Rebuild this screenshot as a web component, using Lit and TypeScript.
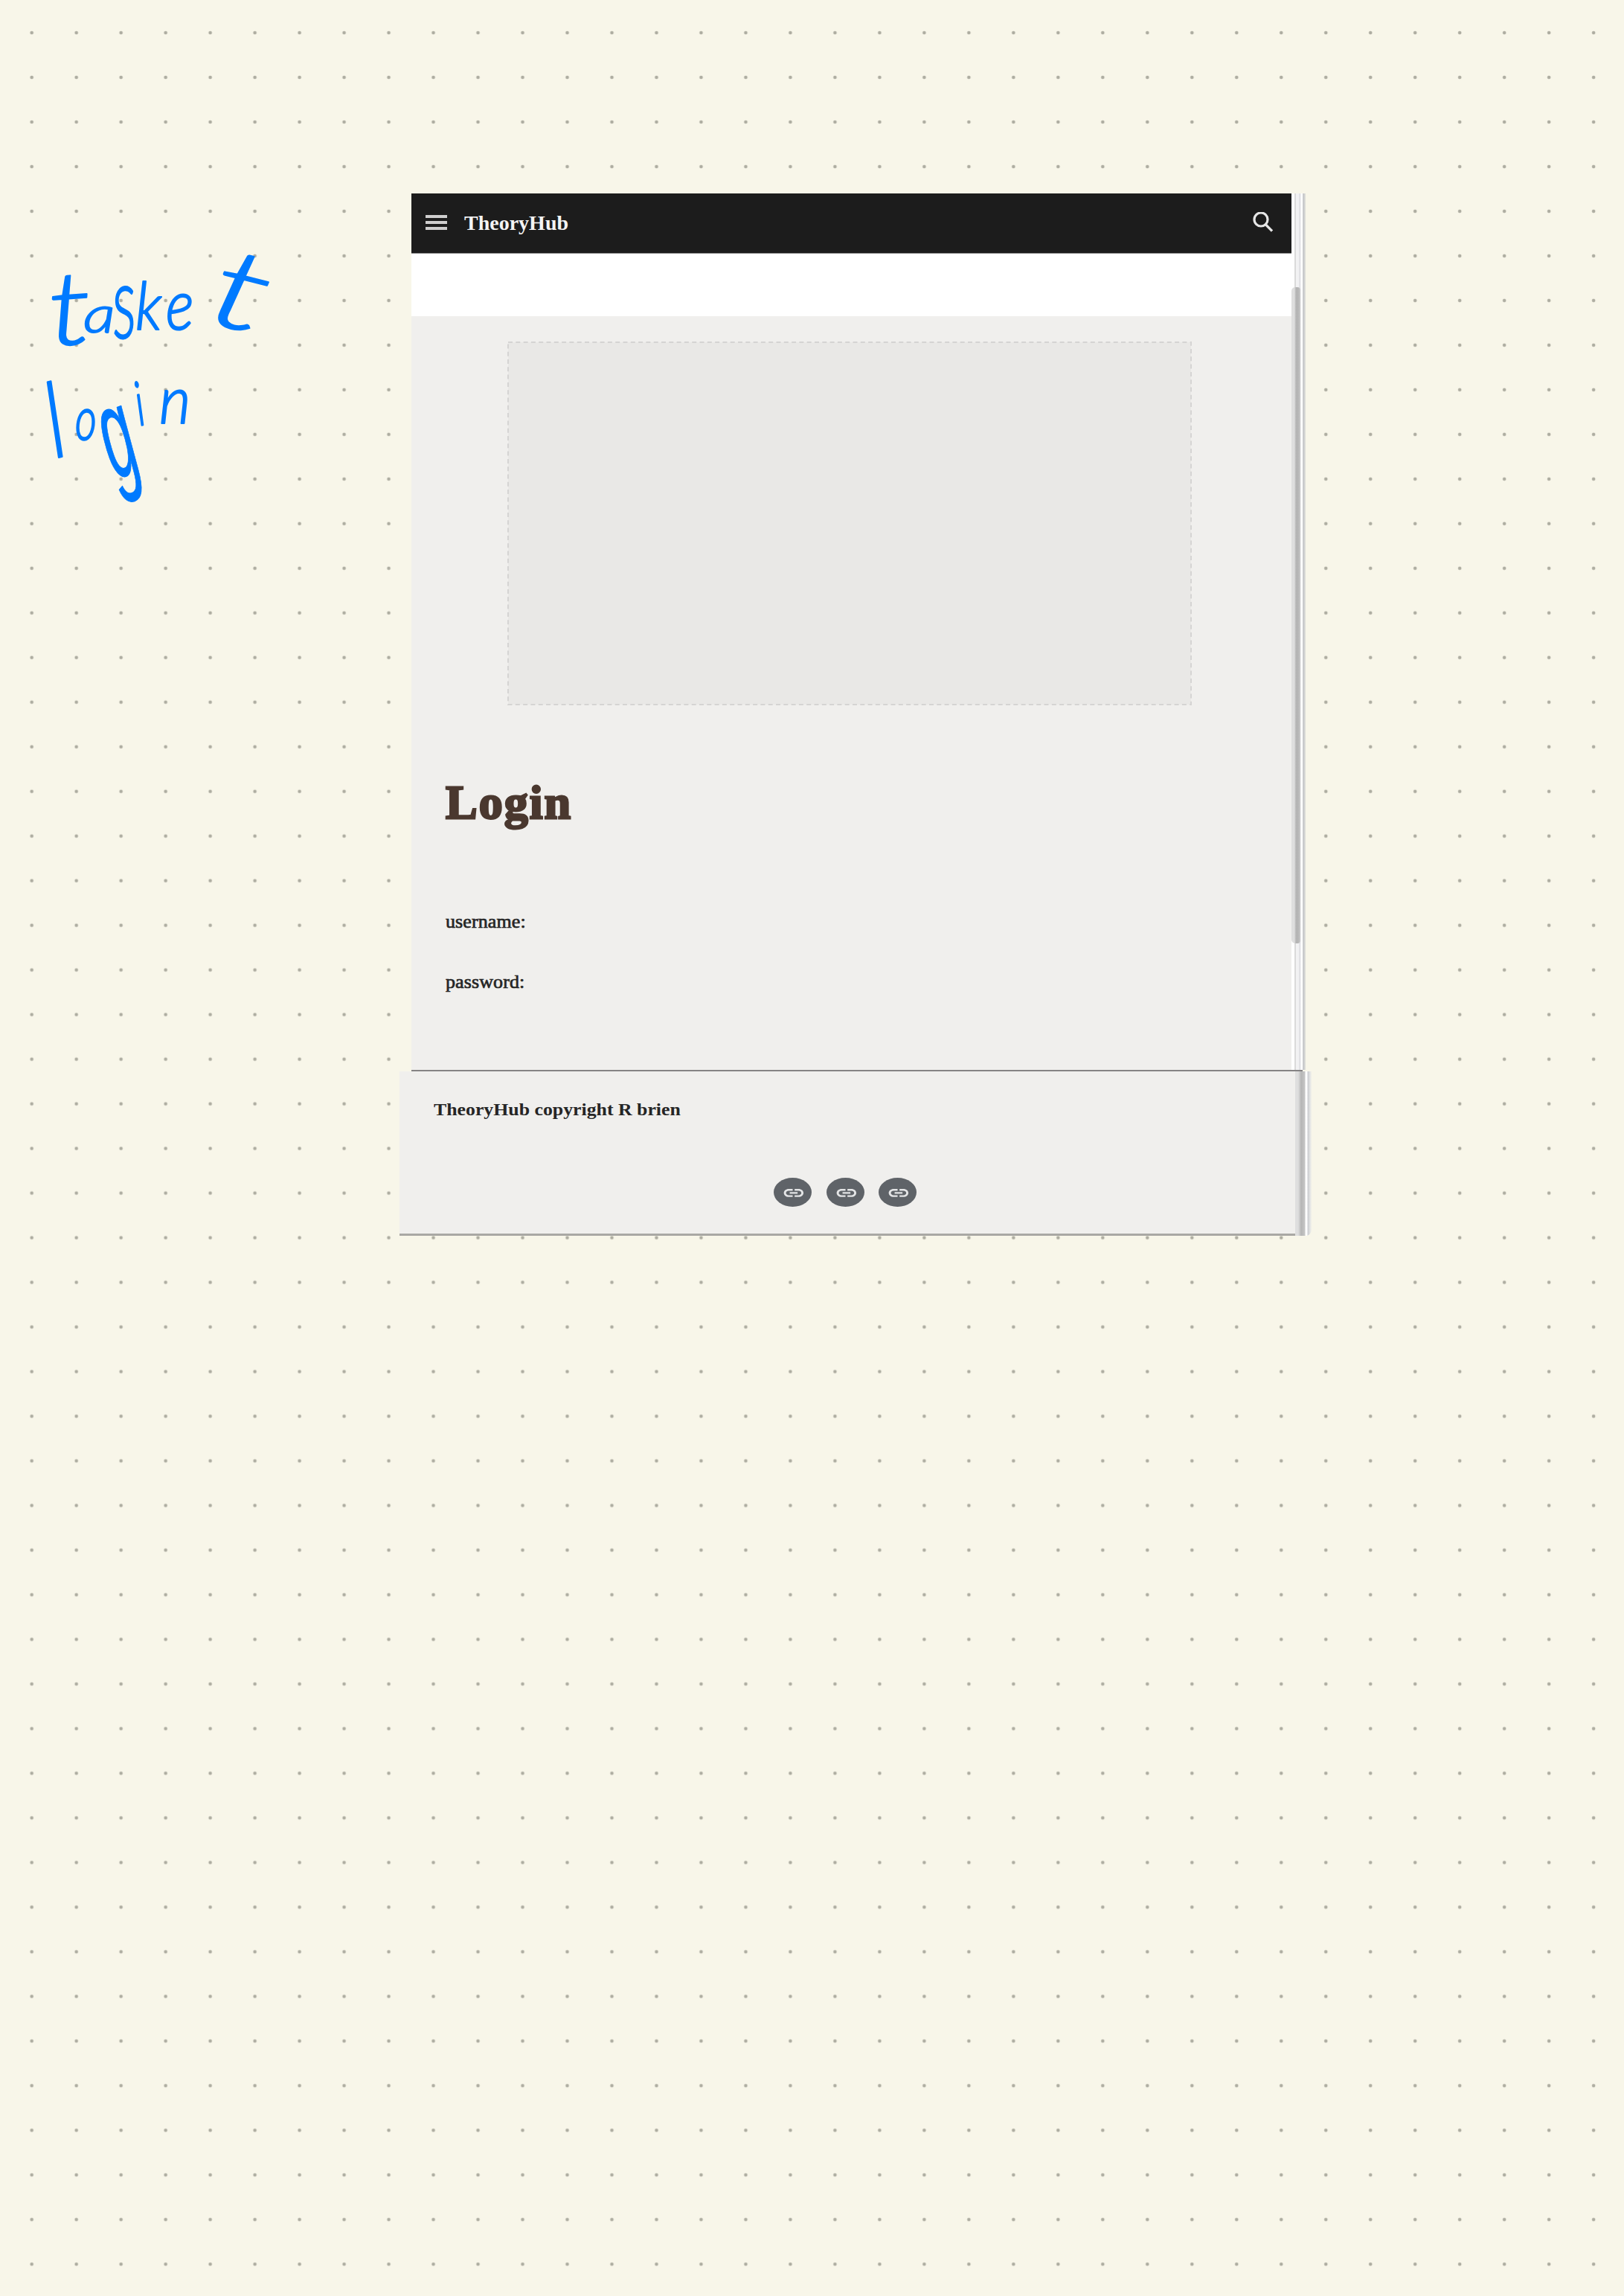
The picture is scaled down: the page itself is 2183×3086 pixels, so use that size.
import { LitElement, html, css, svg } from "lit";
import { customElement } from "lit/decorators.js";

@customElement("link-badge")
class LinkBadge extends LitElement {
  static styles = css`
    :host { display: block; width: 51px; height: 39px; }
    .icon { display: block; width: 51px; height: 39px; }
    .disc { fill: #5f6368; }
    .chain { fill: #e4e5e6; }
  `;
  render() {
    return html`<svg class="icon" viewBox="0 0 51 39">
      <ellipse class="disc" cx="25.5" cy="19.5" rx="25.5" ry="19.5"></ellipse>
      <path class="chain" transform="translate(11 7.7) scale(1.32 1.06)"
        d="M4.200 12c0-1.540 1.260-2.800 2.800-2.800h4V7H7c-2.760 0-5 2.240-5 5s2.240 5 5 5h4v-2.200H7c-1.540 0-2.800-1.260-2.800-2.800zM8 13h8v-2H8v2zm9-6h-4v2.200h4c1.540 0 2.800 1.260 2.800 2.800s-1.260 2.800-2.800 2.800h-4V17h4c2.760 0 5-2.240 5-5s-2.240-5-5-5z"></path>
    </svg>`;
  }
}

interface Mark { ch: string; x: number; y: number; turn: number; sx: number; sy: number; }

const note: Mark[][] = [
  [
    { ch: "t", x: 68, y: 465, turn: -4, sx: 1.7, sy: 1.38 },
    { ch: "a", x: 112, y: 447, turn: 0, sx: 0.86, sy: 0.7 },
    { ch: "s", x: 154, y: 455, turn: -4, sx: 0.8, sy: 1.36 },
    { ch: "k", x: 182, y: 443, turn: 0, sx: 0.8, sy: 0.88 },
    { ch: "e", x: 223, y: 443, turn: 0, sx: 0.8, sy: 0.94 },
    { ch: "t", x: 275, y: 432, turn: 14, sx: 2.25, sy: 1.5 },
  ],
  [
    { ch: "l", x: 74, y: 616, turn: -14, sx: 1.1, sy: 1.4 },
    { ch: "o", x: 101, y: 591, turn: 0, sx: 0.56, sy: 0.8 },
    { ch: "g", x: 155, y: 645, turn: -20, sx: 0.76, sy: 1.72 },
    { ch: "i", x: 188, y: 572, turn: -12, sx: 0.5, sy: 0.82 },
    { ch: "n", x: 214, y: 569, turn: 0, sx: 0.82, sy: 0.88 },
  ],
];

@customElement("app-root")
class AppRoot extends LitElement {
  static styles = css`
    :host { display: block; }
    .paper {
      position: relative; box-sizing: border-box; width: 2183px; height: 3086px;
      padding: 260px 420px 0 537px; overflow: hidden; background-color: #f8f6e9;
      background-image: radial-gradient(circle at 30px 30px, #aeada1 1.900px, rgba(174,173,161,0) 2.700px);
      background-size: 59.99px 59.994px; background-position: 12.700px 14px;
      font-family: "Liberation Serif", serif; color: #252525;
    }
    .ink { position: absolute; left: 0; top: 0; width: 540px; height: 720px; }
    .mark {
      font-family: "Lato", sans-serif; font-size: 100px; font-style: italic; font-weight: 300; fill: #007aff;
      stroke: #007aff; stroke-width: 2px; stroke-linejoin: round; vector-effect: non-scaling-stroke;
    }
    .mark.looped { font-family: "Liberation Sans", sans-serif; stroke-width: 1px; }
    .window { display: flex; width: 1202px; height: 1178px; margin-left: 16px; }
    .page { width: 1183px; display: flex; flex-direction: column; background: #f0efed; }
    .bar { display: flex; align-items: center; height: 81px; background: #1c1c1c; color: #f4f4f4; border-bottom: 1px solid #8b8b8b; box-sizing: border-box; }
    .menu { display: grid; gap: 4px; margin-left: 19px; width: 29px; padding-bottom: 2px; }
    .line { height: 4px; background: #cfcece; }
    .brand { margin-left: 23px; font-size: 28px; font-weight: 700; line-height: 40px; }
    .search { width: 27px; height: 27px; margin-left: auto; margin-right: 25px; margin-bottom: 3px; }
    .lens { fill: none; stroke: #e6e6e6; stroke-width: 3.200; }
    .blank { height: 84px; background: #fff; }
    .body { padding: 34px 46px 0; }
    .drop { width: 920px; height: 489px; margin-left: 83px; display: block; }
    .dashes { fill: #e9e8e6; stroke: #d5d4d3; stroke-width: 2; stroke-dasharray: 6 4.300; }
    h1 { margin: 91px 0 0; font-size: 64px; line-height: 80px; letter-spacing: 2px; color: #4a382f; -webkit-text-stroke: 2.800px #4a382f; }
    .field { font-size: 26px; line-height: 30px; -webkit-text-stroke: 0.700px #252525; letter-spacing: 0.100px; }
    .user { margin-top: 105px; }
    .pass { margin-top: 51px; }
    .track {
      width: 19px; padding-top: 126px; box-sizing: border-box;
      background: linear-gradient(90deg, #fff 4px, #dadada 4px 6px, #f2f2f3 6px 10px, #e2e2e5 10px 12px, #fff 13px 15px, #c9cacc 15px 17px, #dddeda 18px);
    }
    .thumb { width: 12px; height: 882px; border-radius: 5px 4px 4px 5px; background: linear-gradient(90deg, #dedede 0 4px, #b5b5b5 6px 9px, #c9c9c9 12px); }
    .rule { width: 1198px; height: 2px; margin-left: 16px; background: #858384; }
    .footer { display: flex; width: 1226px; height: 221px; }
    .panel { display: flex; flex-direction: column; width: 1204px; background: #f0efed; border-bottom: 3px solid #a9a8a4; box-sizing: border-box; }
    .copy { margin: 36px 0 0 46px; font-size: 24px; line-height: 30px; font-weight: 700; white-space: nowrap; transform: scaleX(1.075); transform-origin: left; }
    .links { display: flex; gap: 19.500px; margin: 77px 0 0 503px; }
    .edge { width: 22px; border-bottom-right-radius: 8px; background: linear-gradient(90deg, #dedede 0 4px, #cacaca 6px, #b5b5b5 8px, #c6c6c6 13px, #fff 14px 16px, #c9cbcf 17px, #e4e5e4 20px, #f2f1e9 22px); }
  `;

  private mark(m: Mark) {
    const place = `translate(${m.x} ${m.y}) rotate(${m.turn}) scale(${m.sx} ${m.sy})`;
    return svg`<text class=${m.ch === "g" ? "mark looped" : "mark"} transform=${place}>${m.ch}</text>`;
  }

  render() {
    return html`<main class="paper">
      <svg class="ink" viewBox="0 0 540 720">${note.map((word) => svg`<g>${word.map((m) => this.mark(m))}</g>`)}</svg>
      <section class="window">
        <div class="page">
          <header class="bar">
            <div class="menu"><span class="line"></span><span class="line"></span><span class="line"></span></div>
            <div class="brand">TheoryHub</div>
            <svg class="search" viewBox="0 0 27 27"><circle class="lens" cx="11" cy="10" r="9"></circle><path class="lens" d="M17 16.500 26 25.500"></path></svg>
          </header>
          <div class="blank"></div>
          <div class="body">
            <svg class="drop" viewBox="0 0 920 489"><rect class="dashes" x="1" y="1" width="918" height="487"></rect></svg>
            <h1>Login</h1>
            <div class="field user">username:</div>
            <div class="field pass">password:</div>
          </div>
        </div>
        <div class="track"><div class="thumb"></div></div>
      </section>
      <div class="rule"></div>
      <footer class="footer">
        <div class="panel">
          <div class="copy">TheoryHub copyright R brien</div>
          <nav class="links"><link-badge></link-badge><link-badge></link-badge><link-badge></link-badge></nav>
        </div>
        <div class="edge"></div>
      </footer>
    </main>`;
  }
}
